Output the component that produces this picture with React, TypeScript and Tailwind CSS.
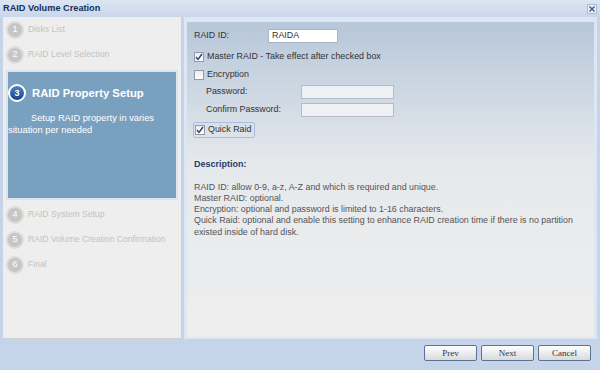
import React from 'react';

const font = "font-['Liberation_Sans',Arial,sans-serif]";

const Step: React.FC<{ n: number; label: string }> = ({ n, label }) => (
  <div className="h-[25px] flex items-center pl-[3px] whitespace-nowrap">
    <div className="w-[18px] h-[18px] rounded-full bg-[#c6c6c6] border-2 border-[#dcdcdc] flex items-center justify-center text-white text-[9px] leading-none">
      {n}
    </div>
    <span className="ml-[4px] text-[8.6px] text-[#c2c2c2]">{label}</span>
  </div>
);

const Check: React.FC<{ checked?: boolean }> = ({ checked }) => (
  <div className="w-[10px] h-[10px] border border-[#8f9aaa] bg-gradient-to-b from-[#e9ecf0] to-white flex items-center justify-center shrink-0">
    {checked && (
      <svg width="8" height="8" viewBox="0 0 8 8">
        <path d="M1 4 L3 6.5 L7 1" stroke="#243a6b" strokeWidth="1.3" fill="none" />
      </svg>
    )}
  </div>
);

const Btn: React.FC<{ label: string }> = ({ label }) => (
  <button className="w-[53px] h-[16px] rounded-[2px] border border-[#5d7393] bg-gradient-to-b from-white to-[#d9dadd] text-[9px] leading-none text-[#333] font-['Liberation_Serif',serif]">
    {label}
  </button>
);

export default function App() {
  return (
    <div className={`w-[600px] h-[370px] bg-[#c5d4e8] flex flex-col overflow-hidden whitespace-nowrap ${font}`}>
      {/* title bar */}
      <div className="h-[17px] flex items-center justify-between pl-[3px] pr-[3px] bg-gradient-to-b from-[#dce6f3] to-[#c9d7ea]">
        <span className="text-[9.2px] font-bold text-[#15305b]">RAID Volume Creation</span>
        <div className="w-[10px] h-[10px] border border-[#a9bcd6] bg-[#e6eef8] flex items-center justify-center">
          <svg width="6" height="6" viewBox="0 0 6 6">
            <path d="M0.5 0.5 L5.5 5.5 M5.5 0.5 L0.5 5.5" stroke="#3c5a8c" strokeWidth="1.4" />
          </svg>
        </div>
      </div>

      <div className="flex h-[322px] px-[3px]">
        {/* left steps */}
        <div className="w-[179px] bg-[#eeeeee] border-r border-b border-[#cfcfcf]">
          <Step n={1} label="Disks List" />
          <Step n={2} label="RAID Level Selection" />
          <div className="mt-[3px] ml-[3px] mr-[3px] h-[130px] border-2 border-[#d9e5f1] bg-[#7aa0bf] whitespace-normal">
            <div className="flex items-center pt-[12px]">
              <div className="w-[18px] h-[18px] rounded-full bg-gradient-to-b from-[#4f86c9] to-[#173f8a] border-2 border-white flex items-center justify-center text-white text-[9px] font-bold leading-none">
                3
              </div>
              <span className="ml-[6px] text-[11.3px] font-bold text-white whitespace-nowrap">RAID Property Setup</span>
            </div>
            <p className="mt-[10px] text-[9.3px] leading-[12px] text-white indent-[23px] pr-[20px]">
              Setup RAID property in varies situation per needed
            </p>
          </div>
          <div className="h-[2px]" />
          <Step n={4} label="RAID System Setup" />
          <Step n={5} label="RAID Volume Creation Confirmation" />
          <Step n={6} label="Final" />
        </div>

        {/* right form */}
        <div className="flex-1 ml-[2px] border-[3px] border-t-[5px] border-[#dde7f3] border-b-[2px]">
          <div className="h-full bg-gradient-to-b from-[#b6c7d9] via-[#e6e9ec] via-[45%] to-[#eeeeee] pl-[7px] pt-[7px] text-[8.9px] text-[#333]">
            <div className="flex items-center h-[14px]">
              <span className="w-[74px]">RAID ID:</span>
              <div className="w-[70px] h-[14px] bg-white border border-[#a9b5c4] flex items-center pl-[3px]">
                RAIDA
              </div>
            </div>
            <div className="flex items-center mt-[9px] h-[10px]">
              <Check checked />
              <span className="ml-[3px]">Master RAID - Take effect after checked box</span>
            </div>
            <div className="flex items-center mt-[8px] h-[10px]">
              <Check />
              <span className="ml-[3px]">Encryption</span>
            </div>
            <div className="flex items-center mt-[5px] h-[14px] pl-[12px]">
              <span className="w-[95px]">Password:</span>
              <div className="w-[93px] h-[14px] bg-[#eef0f3] border border-[#b3bcc8]" />
            </div>
            <div className="flex items-center mt-[4px] h-[14px] pl-[12px]">
              <span className="w-[95px]">Confirm Password:</span>
              <div className="w-[93px] h-[14px] bg-[#eef0f3] border border-[#b3bcc8]" />
            </div>
            <div className="mt-[5px] -ml-[1px] w-fit h-[16px] border border-[#a8c0e0] rounded-[2px] flex items-center pl-[1px] pr-[3px]">
              <Check checked />
              <span className="ml-[3px]">Quick Raid</span>
            </div>
            <div className="mt-[20px] font-bold text-[9px] text-[#1f3c6c]">Description:</div>
            <div className="mt-[10px] text-[8.9px] leading-[11.3px] text-[#555]">
              <p>RAID ID: allow 0-9, a-z, A-Z and which is required and unique.</p>
              <p>Master RAID: optional.</p>
              <p>Encryption: optional and password is limited to 1-16 characters.</p>
              <p>Quick Raid: optional and enable this setting to enhance RAID creation time if there is no partition</p>
              <p>existed inside of hard disk.</p>
            </div>
          </div>
        </div>
      </div>

      {/* footer */}
      <div className="flex-1 flex items-start justify-end gap-[4px] pt-[6px] pr-[9px]">
        <Btn label="Prev" />
        <Btn label="Next" />
        <Btn label="Cancel" />
      </div>
    </div>
  );
}
